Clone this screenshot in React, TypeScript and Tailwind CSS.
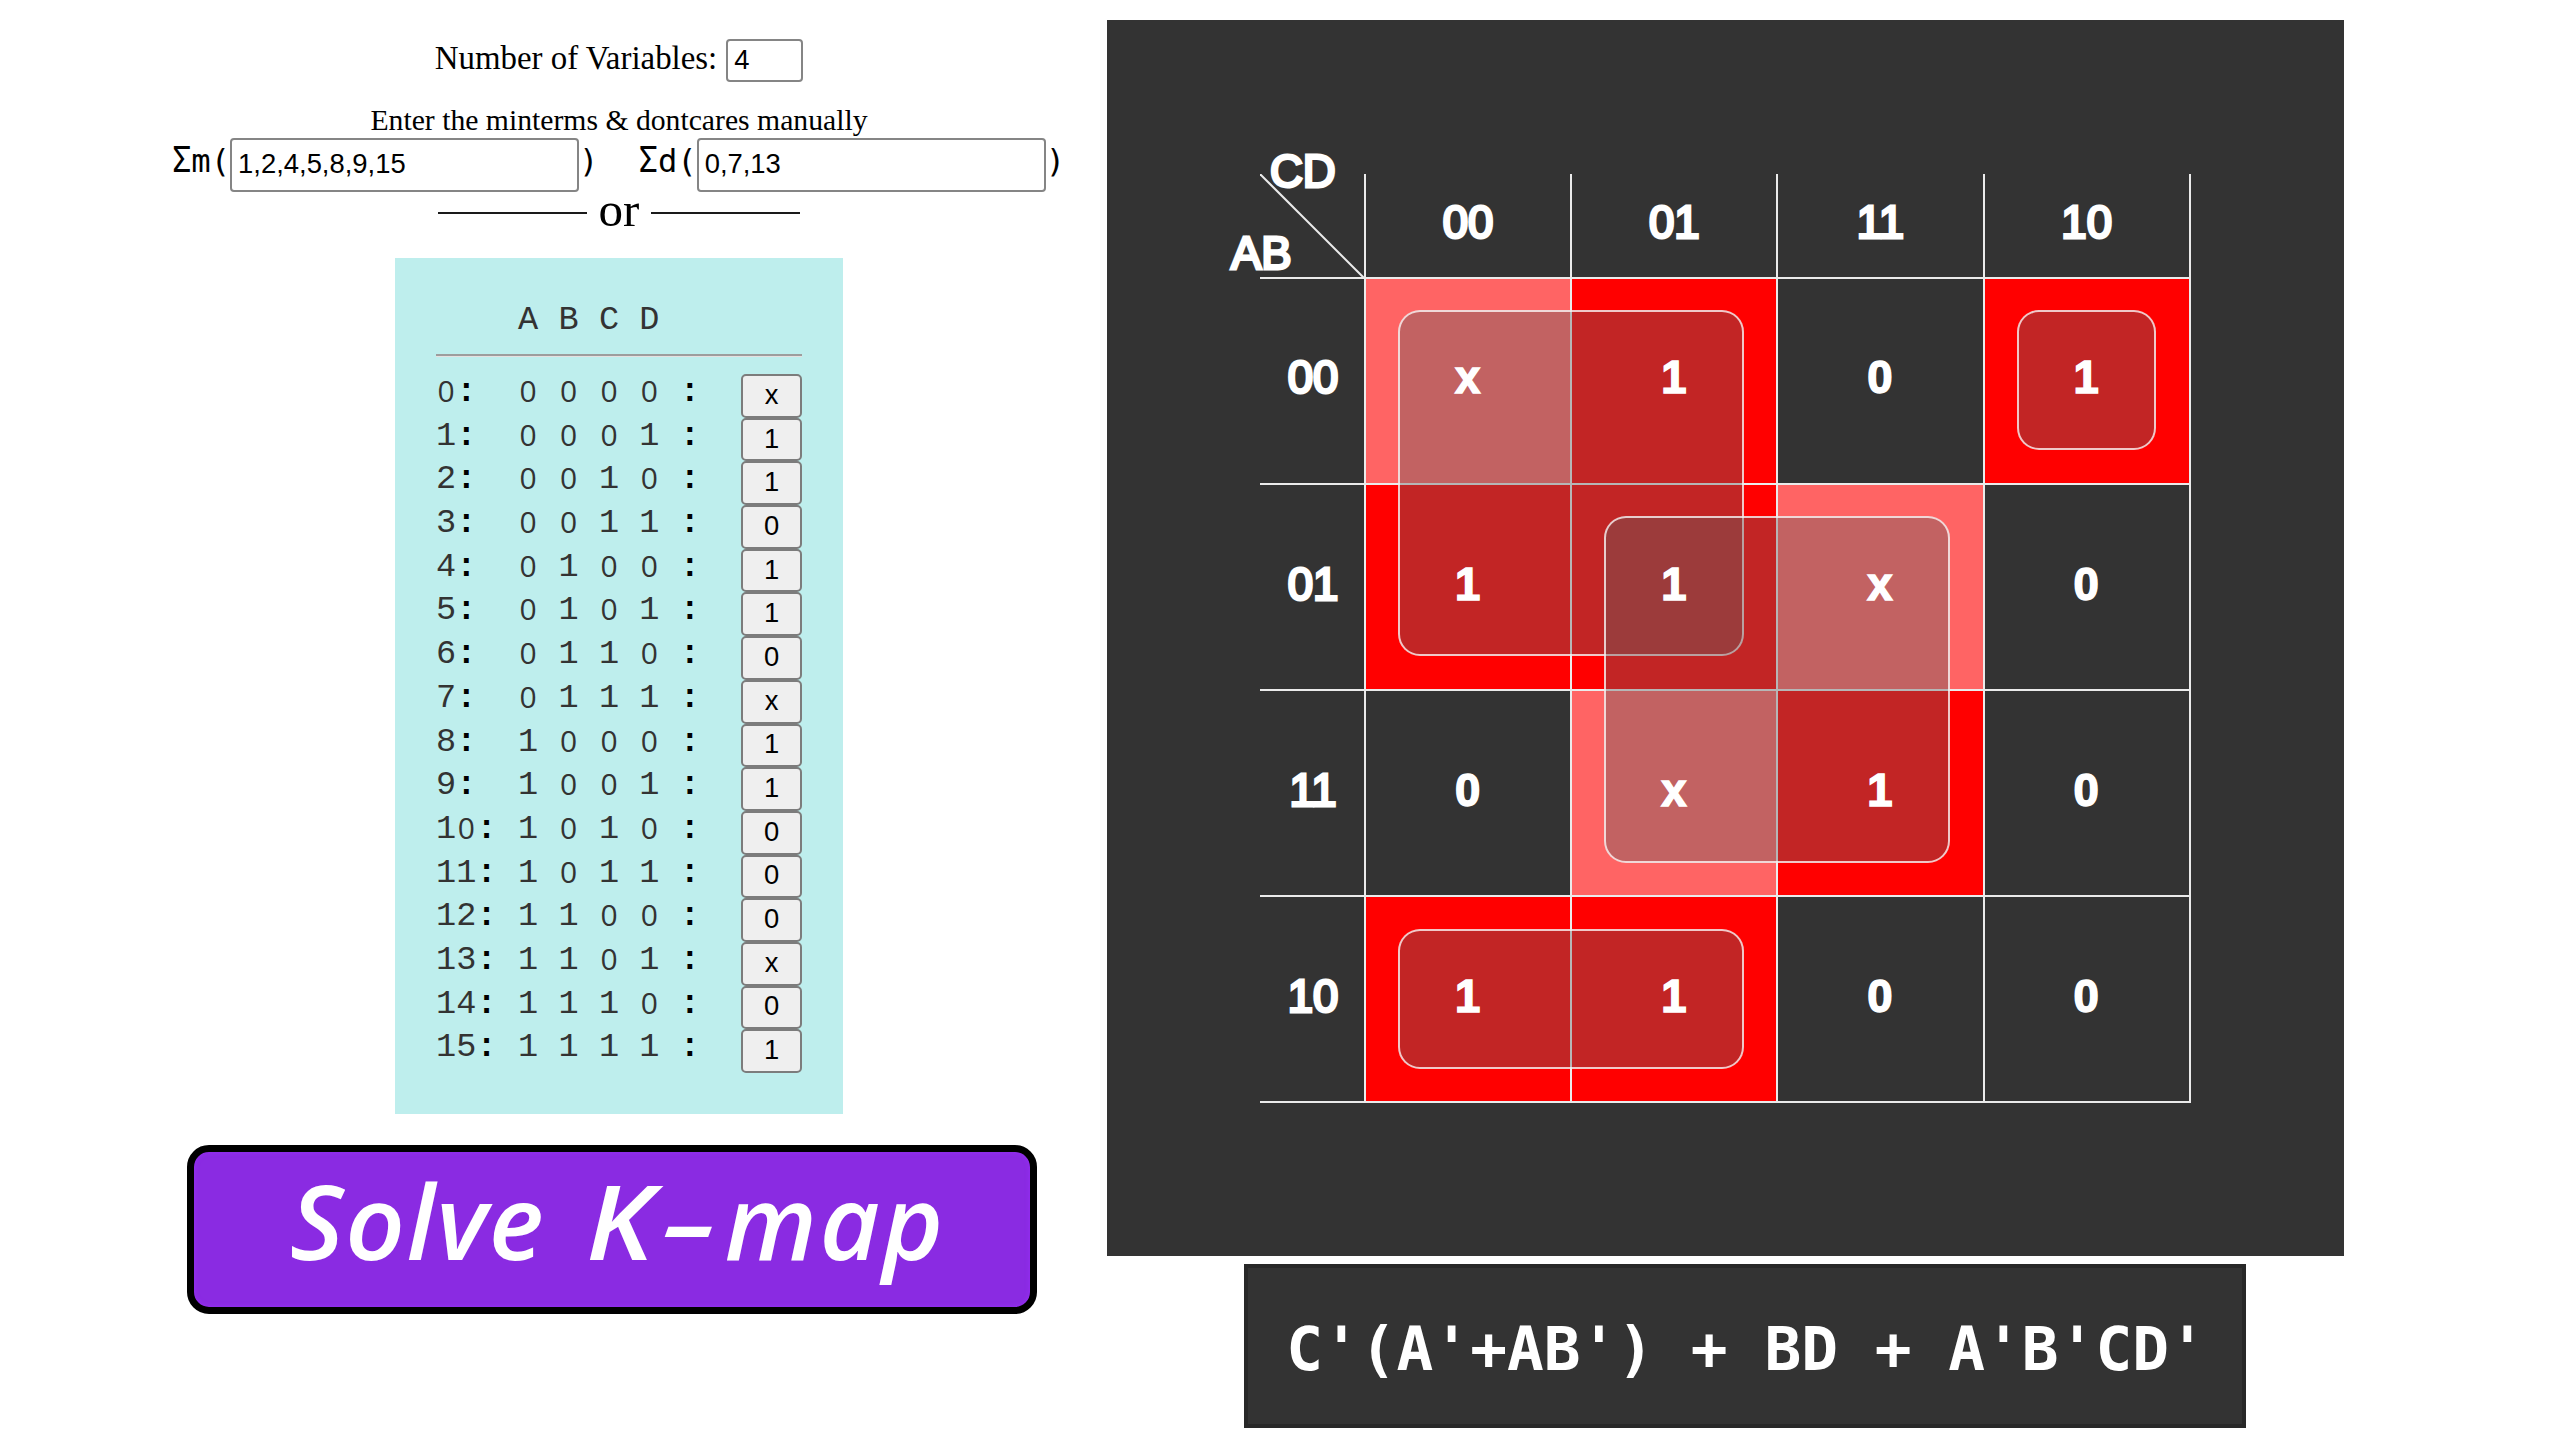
import React from "react";

const OUTPUTS = ["x", "1", "1", "0", "1", "1", "0", "x", "1", "1", "0", "0", "0", "x", "0", "1"];

const GRAY = ["00", "01", "11", "10"];

const KMAP = [
  ["x", "1", "0", "1"],
  ["1", "1", "x", "0"],
  ["0", "x", "1", "0"],
  ["1", "1", "0", "0"],
];

const COLS = ["col-start-2", "col-start-3", "col-start-4", "col-start-5"];
const ROWS = ["row-start-2", "row-start-3", "row-start-4", "row-start-5"];

const GROUPS = [
  "col-start-2 col-span-2 row-start-2 row-span-2",
  "col-start-5 row-start-2",
  "col-start-3 col-span-2 row-start-3 row-span-2",
  "col-start-2 col-span-2 row-start-5",
];

const FILL: Record<string, string> = { x: "bg-[#ff6464]", "1": "bg-[#ff0000]", "0": "" };

function Glyph({ c }: { c: string }) {
  if (c === "0") return <span className="w-[20.2px] text-center font-['Open_Sans'] text-[30px] leading-[34px] font-normal">0</span>;
  return <span className="w-[20.2px] text-center">{c}</span>;
}

function TermInput({ label, value }: { label: string; value: string }) {
  return (
    <div className="flex items-start font-['DejaVu_Sans_Mono'] text-[32.2px] leading-[46px]">
      <span className="inline-block origin-[50%_70%] scale-y-110">Σ</span>
      <span>{label}(</span>
      <input
        defaultValue={value}
        className="h-[54px] w-[349px] rounded-[4px] border-2 border-[#858585] bg-white pb-[3px] pl-[6px] font-['Liberation_Sans'] text-[27.4px] text-black"
      />
      <span>)</span>
    </div>
  );
}

function TruthTable() {
  return (
    <div className="mt-[34px] h-[856px] w-[448px] bg-[#beeeed] px-[41px] pt-[40px] font-['Liberation_Mono'] text-[33.6px] text-[#333333]">
      <div className="flex h-[44px] pl-[72px] leading-[44px]">
        {["A", "B", "C", "D"].map((v) => (
          <span key={v} className="w-[40.4px] text-center">{v}</span>
        ))}
      </div>
      <div className="mt-[12px] h-[3px] border-t-2 border-b border-t-[#9d9d9d] border-b-[#e6e0e0]" />
      <div className="mt-[17px]">
        {OUTPUTS.map((out, i) => (
          <div key={i} className="flex h-[43.7px] items-start leading-[37px]">
            <span className="flex w-[72px]">
              {String(i).split("").map((c, k) => (
                <Glyph key={k} c={c} />
              ))}
              <b className="text-black">:</b>
            </span>
            {i.toString(2).padStart(4, "0").split("").map((c, k) => (
              <span key={k} className="flex w-[40.4px] justify-center">
                <Glyph c={c} />
              </span>
            ))}
            <b className="w-[40.4px] text-center text-black">:</b>
            <button className="ml-auto h-[43.7px] w-[61px] rounded-[5px] border-2 border-[#7c7c7c] bg-[#efefef] pb-[2px] font-['Liberation_Sans'] text-[27.4px] leading-[36px] text-black">
              {out}
            </button>
          </div>
        ))}
      </div>
    </div>
  );
}

function KMap() {
  return (
    <div className="h-[1236px] w-[1237px] bg-[#333333] pt-[153.5px] pl-[153px] font-['Liberation_Sans'] text-[45.5px] leading-none text-white">
      <div className="box-content grid w-[928.8px] grid-cols-[104px_repeat(4,206.2px)] grid-rows-[103px_repeat(4,206.2px)] border-r-2 border-b-2 border-[#ebebeb]">
        <div className="relative col-start-1 row-start-1 [-webkit-text-stroke:3px_white]">
          <svg viewBox="0 0 104 104" className="absolute top-0 left-0 h-[104px] w-[104px]">
            <line x1="0" y1="0" x2="104" y2="104" stroke="#ebebeb" strokeWidth="2" />
          </svg>
          <span className="absolute top-[-25px] left-[10px]">CD</span>
          <span className="absolute top-[57px] left-[-29px]">AB</span>
        </div>
        {GRAY.map((g, i) => (
          <React.Fragment key={g}>
            <div className={`${COLS[i]} row-start-1 flex items-center justify-center border-l-2 border-[#ebebeb] pb-[4px] [-webkit-text-stroke:3px_white]`}>
              {g}
            </div>
            <div className={`${ROWS[i]} col-start-1 flex items-center justify-center border-t-2 border-[#ebebeb] pb-[5px] pl-[2px] [-webkit-text-stroke:3px_white]`}>
              {g}
            </div>
          </React.Fragment>
        ))}
        {KMAP.map((row, r) =>
          row.map((v, c) => (
            <div key={`${r}${c}`} className={`${COLS[c]} ${ROWS[r]} ${FILL[v]} border-t-2 border-l-2 border-[#ebebeb]`} />
          ))
        )}
        {GROUPS.map((g) => (
          <div key={g} className={`${g} mt-[33.5px] mr-[32.5px] mb-[32.5px] ml-[34px] rounded-[22px] border-2 border-white/75 bg-[#616161]/[.385]`} />
        ))}
        {KMAP.map((row, r) =>
          row.map((v, c) => (
            <div
              key={`${r}${c}`}
              className={`${COLS[c]} ${ROWS[r]} z-10 flex items-center justify-center pb-[3px] pl-[1px] font-bold [-webkit-text-stroke:1.5px_white]`}
            >
              {v}
            </div>
          ))
        )}
      </div>
    </div>
  );
}

export default function App() {
  return (
    <main className="flex h-[1440px] w-[2560px] overflow-hidden bg-white text-black">
      <section className="flex w-[1107px] flex-col items-center pt-[39px] pl-[131px] font-['Liberation_Serif']">
        <div className="flex items-start gap-[9px] text-[32.9px] leading-[39px]">
          <span>Number of Variables:</span>
          <input
            defaultValue="4"
            className="h-[43px] w-[77px] rounded-[4px] border-2 border-[#858585] bg-white pb-[2px] pl-[6px] font-['Liberation_Sans'] text-[27.4px]"
          />
        </div>
        <p className="mt-[20px] text-[29.7px] leading-[36px] whitespace-nowrap">Enter the minterms &amp; dontcares manually</p>
        <div className="flex h-[54px] gap-[40px] pr-[1px]">
          <TermInput label="m" value="1,2,4,5,8,9,15" />
          <TermInput label="d" value="0,7,13" />
        </div>
        <div className="flex h-[32px] items-center gap-[12px] text-[49px] leading-[32px]">
          <span className="mt-[9px] h-[2px] w-[149px] bg-[#1a1a1a]" />
          <span className="mt-[4px]">or</span>
          <span className="mt-[9px] h-[2px] w-[149px] bg-[#1a1a1a]" />
        </div>
        <TruthTable />
        <button className="mt-[31px] -ml-[14px] flex h-[169px] w-[850px] items-center rounded-[22px] border-[7px] border-black bg-[#8a2be2] pb-[19px] pl-[96px] font-['Open_Sans'] text-[104px] leading-none font-semibold whitespace-pre text-white italic shadow-[inset_0_0_5px_#982ff6]">
          <span className="tracking-[1.5px]">Solve </span>
          <span className="ml-[12px] inline-block origin-left scale-x-110">K</span>
          <span className="mr-[20px] ml-[25px] inline-block scale-x-[1.7]">-</span>
          <span className="tracking-[2.5px]">map</span>
        </button>
      </section>
      <section className="flex w-[1237px] flex-col items-center pt-[20px]">
        <KMap />
        <div className="mt-[8px] ml-[38px] flex h-[164px] w-[1002px] items-center justify-center border-[4px] border-[#282828] bg-[#333333] pt-[5px] pl-[3px] font-['DejaVu_Sans_Mono'] text-[61.1px] leading-none font-bold whitespace-pre text-white">
          C'(A'+AB') + BD + A'B'CD'
        </div>
      </section>
    </main>
  );
}
